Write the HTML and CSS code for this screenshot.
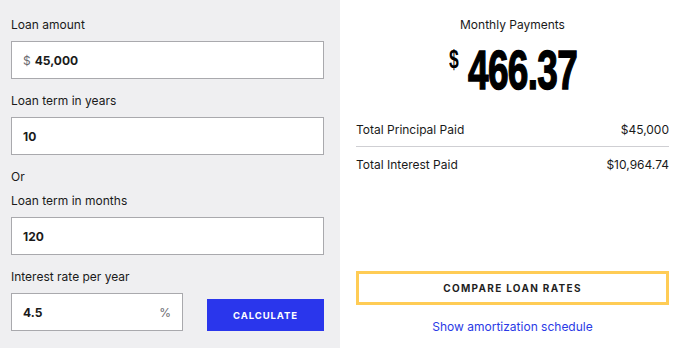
FILE: index.html
```html
<!DOCTYPE html>
<html lang="en">
<head>
  <meta charset="UTF-8">
  <meta name="viewport" content="width=device-width, initial-scale=1.0">
  <title>Loan Calculator</title>
  <link rel="stylesheet" href="styles.css">
</head>
<body>
  <div class="calculator">
    <div class="inputs">
      <div class="label">Loan amount</div>
      <div class="field">
        <span class="unit">$</span>
        <span class="value">45,000</span>
      </div>

      <div class="label">Loan term in years</div>
      <div class="field">
        <span class="value">10</span>
      </div>

      <div class="label or">Or</div>
      <div class="label">Loan term in months</div>
      <div class="field">
        <span class="value">120</span>
      </div>

      <div class="label">Interest rate per year</div>
      <div class="rate-row">
        <div class="field rate">
          <span class="value">4.5</span>
          <span class="unit percent">%</span>
        </div>
        <button class="calculate">CALCULATE</button>
      </div>
    </div>

    <div class="results">
      <div class="result-title">Monthly Payments</div>
      <div class="payment">
        <span class="dollar">$</span>
        <span class="amount">466.37</span>
      </div>

      <div class="totals">
        <div class="total-row">
          <span>Total Principal Paid</span>
          <span>$45,000</span>
        </div>
        <div class="total-row">
          <span>Total Interest Paid</span>
          <span>$10,964.74</span>
        </div>
      </div>

      <button class="compare">COMPARE LOAN RATES</button>
      <a class="schedule" href="#">Show amortization schedule</a>
    </div>
  </div>
</body>
</html>
```

FILE: styles.css
```css
body {
  margin: 0;
  padding: 0;
  font-family: Inter, "Noto Sans", sans-serif;
  color: #1a1a1a;
  background: #ffffff;
}
.calculator {
  display: flex;
  width: 681px;
  height: 348px;
}
.inputs {
  width: 340px;
  box-sizing: border-box;
  padding: 16px 16px 0 11px;
  background: #efeff1;
}
.label {
  font-size: 12px;
  line-height: 18px;
  margin-bottom: 7px;
}
.label.or {
  margin-bottom: 6px;
}
.field {
  display: flex;
  align-items: center;
  box-sizing: border-box;
  height: 38px;
  padding: 0 11px;
  margin-bottom: 13px;
  background: #ffffff;
  border: 1px solid #a9a9ad;
  font-size: 12px;
}
.field .value {
  font-weight: 700;
}
.unit {
  color: #6b6b70;
  margin-right: 4px;
}
.percent {
  margin-left: auto;
  margin-right: 0;
}
.rate-row {
  display: flex;
  align-items: flex-end;
  gap: 24px;
}
.field.rate {
  width: 172px;
  margin-bottom: 0;
}
.calculate {
  flex: 1;
  height: 32px;
  border: none;
  background: #2a36ec;
  color: #ffffff;
  font-family: Inter, sans-serif;
  font-size: 9.5px;
  font-weight: 700;
  letter-spacing: 0.9px;
}
.results {
  flex: 1;
  display: flex;
  flex-direction: column;
  padding: 16px 12px 12px 16px;
}
.result-title {
  font-size: 12px;
  line-height: 18px;
  text-align: center;
}
.payment {
  display: flex;
  justify-content: center;
  align-items: flex-start;
  height: 60px;
  margin-top: 12px;
  font-family: "Liberation Sans", sans-serif;
  font-weight: 700;
  color: #000000;
}
.dollar {
  font-size: 25px;
  line-height: 25px;
  margin-top: 1px;
  margin-right: 8px;
  transform: scaleX(0.7);
}
.amount {
  display: block;
  width: 110px;
  font-size: 56px;
  line-height: 48px;
  letter-spacing: -1px;
  white-space: nowrap;
  transform: scaleX(0.66);
  transform-origin: left;
  -webkit-text-stroke: 1.5px #000000;
}
.totals {
  margin-top: 6px;
  font-size: 12px;
}
.total-row {
  display: flex;
  justify-content: space-between;
  align-items: center;
  height: 34px;
}
.total-row:first-child {
  border-bottom: 1px solid #cfcfd3;
}
.compare {
  margin-top: auto;
  height: 34px;
  background: #ffffff;
  border: 3px solid #ffcc55;
  font-family: Inter, sans-serif;
  font-size: 10px;
  font-weight: 700;
  letter-spacing: 1.3px;
  color: #1f1f1f;
}
.schedule {
  margin-top: 13px;
  font-size: 12px;
  line-height: 18px;
  text-align: center;
  color: #2a3ae6;
  text-decoration: none;
}
```
